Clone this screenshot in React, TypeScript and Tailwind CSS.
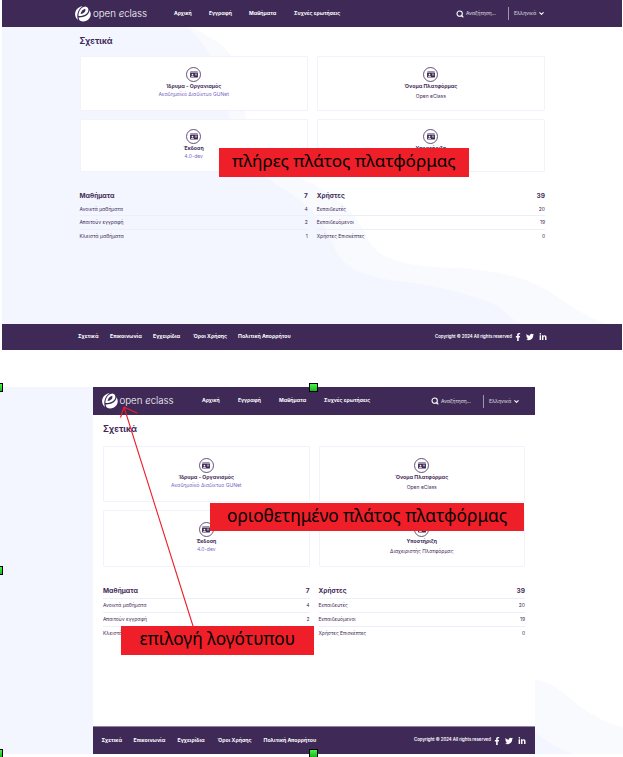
import { ReactNode } from "react";
import { FaFacebookF, FaTwitter, FaLinkedinIn, FaIdCard } from "react-icons/fa";
import { Search, ChevronDown } from "lucide-react";

function Logo() {
  return (
    <div className="flex w-[74px] shrink-0 items-center gap-[2px] text-white">
      <svg viewBox="0 0 16 16" className="h-[16px] w-[16px] shrink-0">
        <path d="M7.600.3C3 .8 0 4.300.1 8.300c.1 2.300 1.100 4.300 2.800 5.600C1.500 9 2.600 3.600 7.600.3Z" fill="#fff" />
        <path d="M10.300.6C6 1.200 3.200 5.600 3.500 10.100c4.200.2 9-1.700 9.800-5.300C13.700 2.500 12.400.9 10.300.6Z" fill="#fff" />
        <path d="M14.600 4.300c1.600 2.700 1.500 6-.6 8.500-2.500 3-6.600 3.500-9.200 1.700-.6-.8-1-1.800-1.200-3C8.900 11.700 13.900 9.300 14.600 4.300Z" fill="#fff" />
        <path d="M5.500 8C6 5.200 7.800 3.300 10.200 2.700c1 2.500-1.300 4.900-4.700 5.300Z" fill="#3f2a57" />
      </svg>
      <span className="text-[9.700px] leading-none font-light whitespace-pre">
        open <span className="italic">e</span>class
      </span>
    </div>
  );
}

type Item = [string, string];

function Links({ items, className }: { items: Item[]; className: string }) {
  return (
    <nav className={`flex items-center font-bold text-white ${className}`}>
      {items.map(([label, width]) => (
        <span key={label} className={`shrink-0 ${width}`}>{label}</span>
      ))}
    </nav>
  );
}

function Header({ className, nav, navClass }: { className: string; nav: Item[]; navClass: string }) {
  return (
    <header className={`flex items-center bg-[#3f2a57] ${className}`}>
      <Logo />
      <Links items={nav} className={navClass} />
      <div className="ml-auto flex items-center text-[4.900px] text-white/80">
        <Search className="h-[8px] w-[8px] text-white" strokeWidth={3.200} />
        <span className="ml-[2px] w-[42px]">Αναζήτηση...</span>
        <span className="h-[13px] w-px bg-white/50" />
        <span className="ml-[5px] w-[24px]">Ελληνικά</span>
        <ChevronDown className="h-[7px] w-[7px] text-white" strokeWidth={3.500} />
      </div>
    </header>
  );
}

function Footer({ className, links }: { className: string; links: Item[] }) {
  return (
    <footer className={`flex items-center bg-[#3f2a57] ${className}`}>
      <Links items={links} className="text-[5.200px]" />
      <div className="ml-auto flex items-center text-white">
        <span className="w-[80px] text-[4.300px] font-semibold">Copyright © 2024 All rights reserved</span>
        <FaFacebookF className="h-[8px] w-[6px]" />
        <FaTwitter className="ml-[5px] h-[8px] w-[8px]" />
        <FaLinkedinIn className="ml-[5px] h-[8px] w-[8px]" />
      </div>
    </footer>
  );
}

function Card({ title, sub, link, className }: { title: string; sub: string; link?: boolean; className: string }) {
  return (
    <div className={`flex flex-col items-center rounded-[1px] border border-[#f1f2fb] bg-white ${className}`}>
      <span className="flex h-[15px] w-[15px] shrink-0 items-center justify-center rounded-full border-[0.700px] border-[#3f2a57]/80">
        <FaIdCard className="h-[7px] w-[8px]" />
      </span>
      <b className="h-[8px] text-[5.200px] leading-[8px]">{title}</b>
      <span className={link ? "text-[5px] leading-[9px] text-[#7a68c4]" : "mt-[2px] text-[5px] leading-[9px]"}>{sub}</span>
    </div>
  );
}

function Stats({ title, total, rows, head, row }: { title: string; total: string; rows: Item[]; head: string; row: string }) {
  return (
    <div className="flex flex-1 flex-col">
      <div className={`flex items-center justify-between text-[6.500px] font-bold ${head}`}>
        <span>{title}</span>
        <span>{total}</span>
      </div>
      {rows.map(([label, n]) => (
        <div key={label} className={`flex items-center justify-between border-[#eceef8] text-[4.950px] ${row}`}>
          <span>{label}</span>
          <span>{n}</span>
        </div>
      ))}
    </div>
  );
}

const courses: Item[] = [["Ανοικτά μαθήματα", "4"], ["Απαιτούν εγγραφή", "2"], ["Κλειστά μαθήματα", "1"]];
const users: Item[] = [["Εκπαιδευτές", "20"], ["Εκπαιδευόμενοι", "19"], ["Χρήστες Επισκέπτες", "0"]];

function Label({ className, children }: { className: string; children: ReactNode }) {
  return (
    <div className={`absolute flex items-center justify-center bg-[#ee1f29] pb-[3px] font-['Noto_Sans',sans-serif] whitespace-nowrap text-black ${className}`}>
      {children}
    </div>
  );
}

function Handle({ className }: { className: string }) {
  return <span className={`absolute h-[9px] border border-black bg-linear-to-b from-[#4cf04c] to-[#10b818] ${className}`} />;
}

export default function App() {
  return (
    <div className="relative h-[757px] w-[623px] overflow-hidden bg-white font-[Inter,sans-serif] leading-none whitespace-nowrap text-[#3f2a57]">
      <section className="relative ml-[2px] flex h-[350px] w-[620px] flex-col">
        <svg viewBox="2 27 620 297" className="absolute top-[27px] left-0 h-[297px] w-[620px]">
          <path d="M2 27H190C215 38 226 48 232 57C240 72 242 90 246 118C252 145 280 170 311 183C340 198 356 215 365 233C375 256 390 266 457 268C516 272 540 284 560 299C580 312 595 321 608 324H2Z" fill="#f9fafe" />
          <path d="M2 27H187C205 42 218 65 226 100C230 130 240 158 268 179C300 199 318 211 330 237C340 266 352 277 421 284C450 289 490 300 500 308C510 316 515 321 520 324H2Z" fill="#f3f6fe" />
        </svg>
        <Header
          className="h-[27px] pr-[77px] pl-[73px]"
          navClass="ml-[25px] text-[5.050px]"
          nav={[["Αρχική", "w-[35px]"], ["Εγγραφή", "w-[40px]"], ["Μαθήματα", "w-[45px]"], ["Συχνές ερωτήσεις", "w-[48px]"]]}
        />
        <main className="relative flex flex-1 flex-col pr-[77px] pl-[77.500px]">
          <h1 className="mt-[9px] h-[20px] text-[8.400px] leading-[10px] font-bold">Σχετικά</h1>
          <div className="grid grid-cols-2 gap-x-[9px] gap-y-[8px]">
            <Card className="h-[55px] pt-[10px]" title="Ίδρυμα - Οργανισμός" sub="Ακαδημαϊκό Διαδίκτυο GUNet" link />
            <Card className="h-[55px] pt-[10px]" title="Όνομα Πλατφόρμας" sub="Open eClass" />
            <Card className="h-[53px] pt-[9px]" title="Έκδοση" sub="4.0-dev" link />
            <Card className="h-[53px] pt-[9px]" title="Υποστήριξη" sub="" />
          </div>
          <div className="mt-[17px] flex gap-[9px]">
            <Stats title="Μαθήματα" total="7" rows={courses} head="h-[14px]" row="h-[13.400px] not-last:border-b" />
            <Stats title="Χρήστες" total="39" rows={users} head="h-[14px]" row="h-[13.400px] not-last:border-b" />
          </div>
        </main>
        <Footer
          className="h-[26px] pr-[75px] pl-[76px]"
          links={[["Σχετικά", "w-[32px]"], ["Επικοινωνία", "w-[43px]"], ["Εγχειρίδια", "w-[40px]"], ["Όροι Χρήσης", "w-[45px]"], ["Πολιτική Απορρήτου", "w-[54px]"]]}
        />
      </section>

      <section className="relative mt-[37px] flex h-[367px]">
        <div className="w-[92.500px] bg-[#f3f6fe]" />
        <div className="flex w-[442.500px] flex-col">
          <Header
            className="h-[28px] pr-[15px] pl-[9px]"
            navClass="ml-[26.500px] text-[5.050px]"
            nav={[["Αρχική", "w-[36px]"], ["Εγγραφή", "w-[41px]"], ["Μαθήματα", "w-[45px]"], ["Συχνές ερωτήσεις", "w-[48px]"]]}
          />
          <main className="flex flex-1 flex-col pr-[10px] pl-[10.500px]">
            <h1 className="mt-[9px] h-[22px] text-[8.600px] leading-[10px] font-bold">Σχετικά</h1>
            <div className="grid grid-cols-2 gap-x-[9px] gap-y-[8px]">
              <Card className="h-[56px] pt-[10.500px]" title="Ίδρυμα - Οργανισμός" sub="Ακαδημαϊκό Διαδίκτυο GUNet" link />
              <Card className="h-[56px] pt-[10.500px]" title="Όνομα Πλατφόρμας" sub="Open eClass" />
              <Card className="h-[57px] pt-[11px]" title="Έκδοση" sub="4.0-dev" link />
              <Card className="h-[57px] pt-[11px]" title="Υποστήριξη" sub="Διαχειριστής Πλατφόρμας" />
            </div>
            <div className="mt-[17px] flex gap-[9px]">
              <Stats title="Μαθήματα" total="7" rows={courses} head="h-[14px]" row="h-[14px] border-t" />
              <Stats title="Χρήστες" total="39" rows={users} head="h-[14px]" row="h-[14px] border-t" />
            </div>
          </main>
          <Footer
            className="h-[28px] border-t border-[#8f839f] pr-[9px] pl-[9px]"
            links={[["Σχετικά", "w-[32px]"], ["Επικοινωνία", "w-[44px]"], ["Εγχειρίδια", "w-[40px]"], ["Όροι Χρήσης", "w-[46px]"], ["Πολιτική Απορρήτου", "w-[54px]"]]}
          />
        </div>
        <svg viewBox="535 679 88 75" className="h-[75px] w-[88px] self-end">
          <path d="M535 679C560 684 570 702 590 713C604 721 614 726 623 727V754H535Z" fill="#f9fafe" />
          <path d="M535 731C545 741 560 750 574 754H535Z" fill="#f3f6fe" />
        </svg>
      </section>

      <Label className="top-[148px] left-[219px] h-[29px] w-[249.500px] text-[17.100px]">πλήρες πλάτος πλατφόρμας</Label>
      <Label className="top-[503px] left-[210px] h-[28px] w-[314px] text-[17.300px]">οριοθετημένο πλάτος πλατφόρμας</Label>
      <svg viewBox="115 400 85 230" className="absolute top-[400px] left-[115px] h-[230px] w-[85px]">
        <path d="M193 626L124 407M137 413L124 407L120.500 417.500" fill="none" stroke="#ee1f29" strokeWidth="1.100" />
      </svg>
      <Label className="top-[626px] left-[121px] h-[29px] w-[192.500px] text-[17.200px]">επιλογή λογότυπου</Label>

      <Handle className="top-[383px] left-[-6px] w-[9px]" />
      <Handle className="top-[566px] left-[-6px] w-[9px]" />
      <Handle className="top-[749px] left-[-6px] w-[9px]" />
      <Handle className="top-[383px] left-[309px] w-[9px]" />
      <Handle className="top-[749px] left-[309px] w-[9px]" />
    </div>
  );
}
